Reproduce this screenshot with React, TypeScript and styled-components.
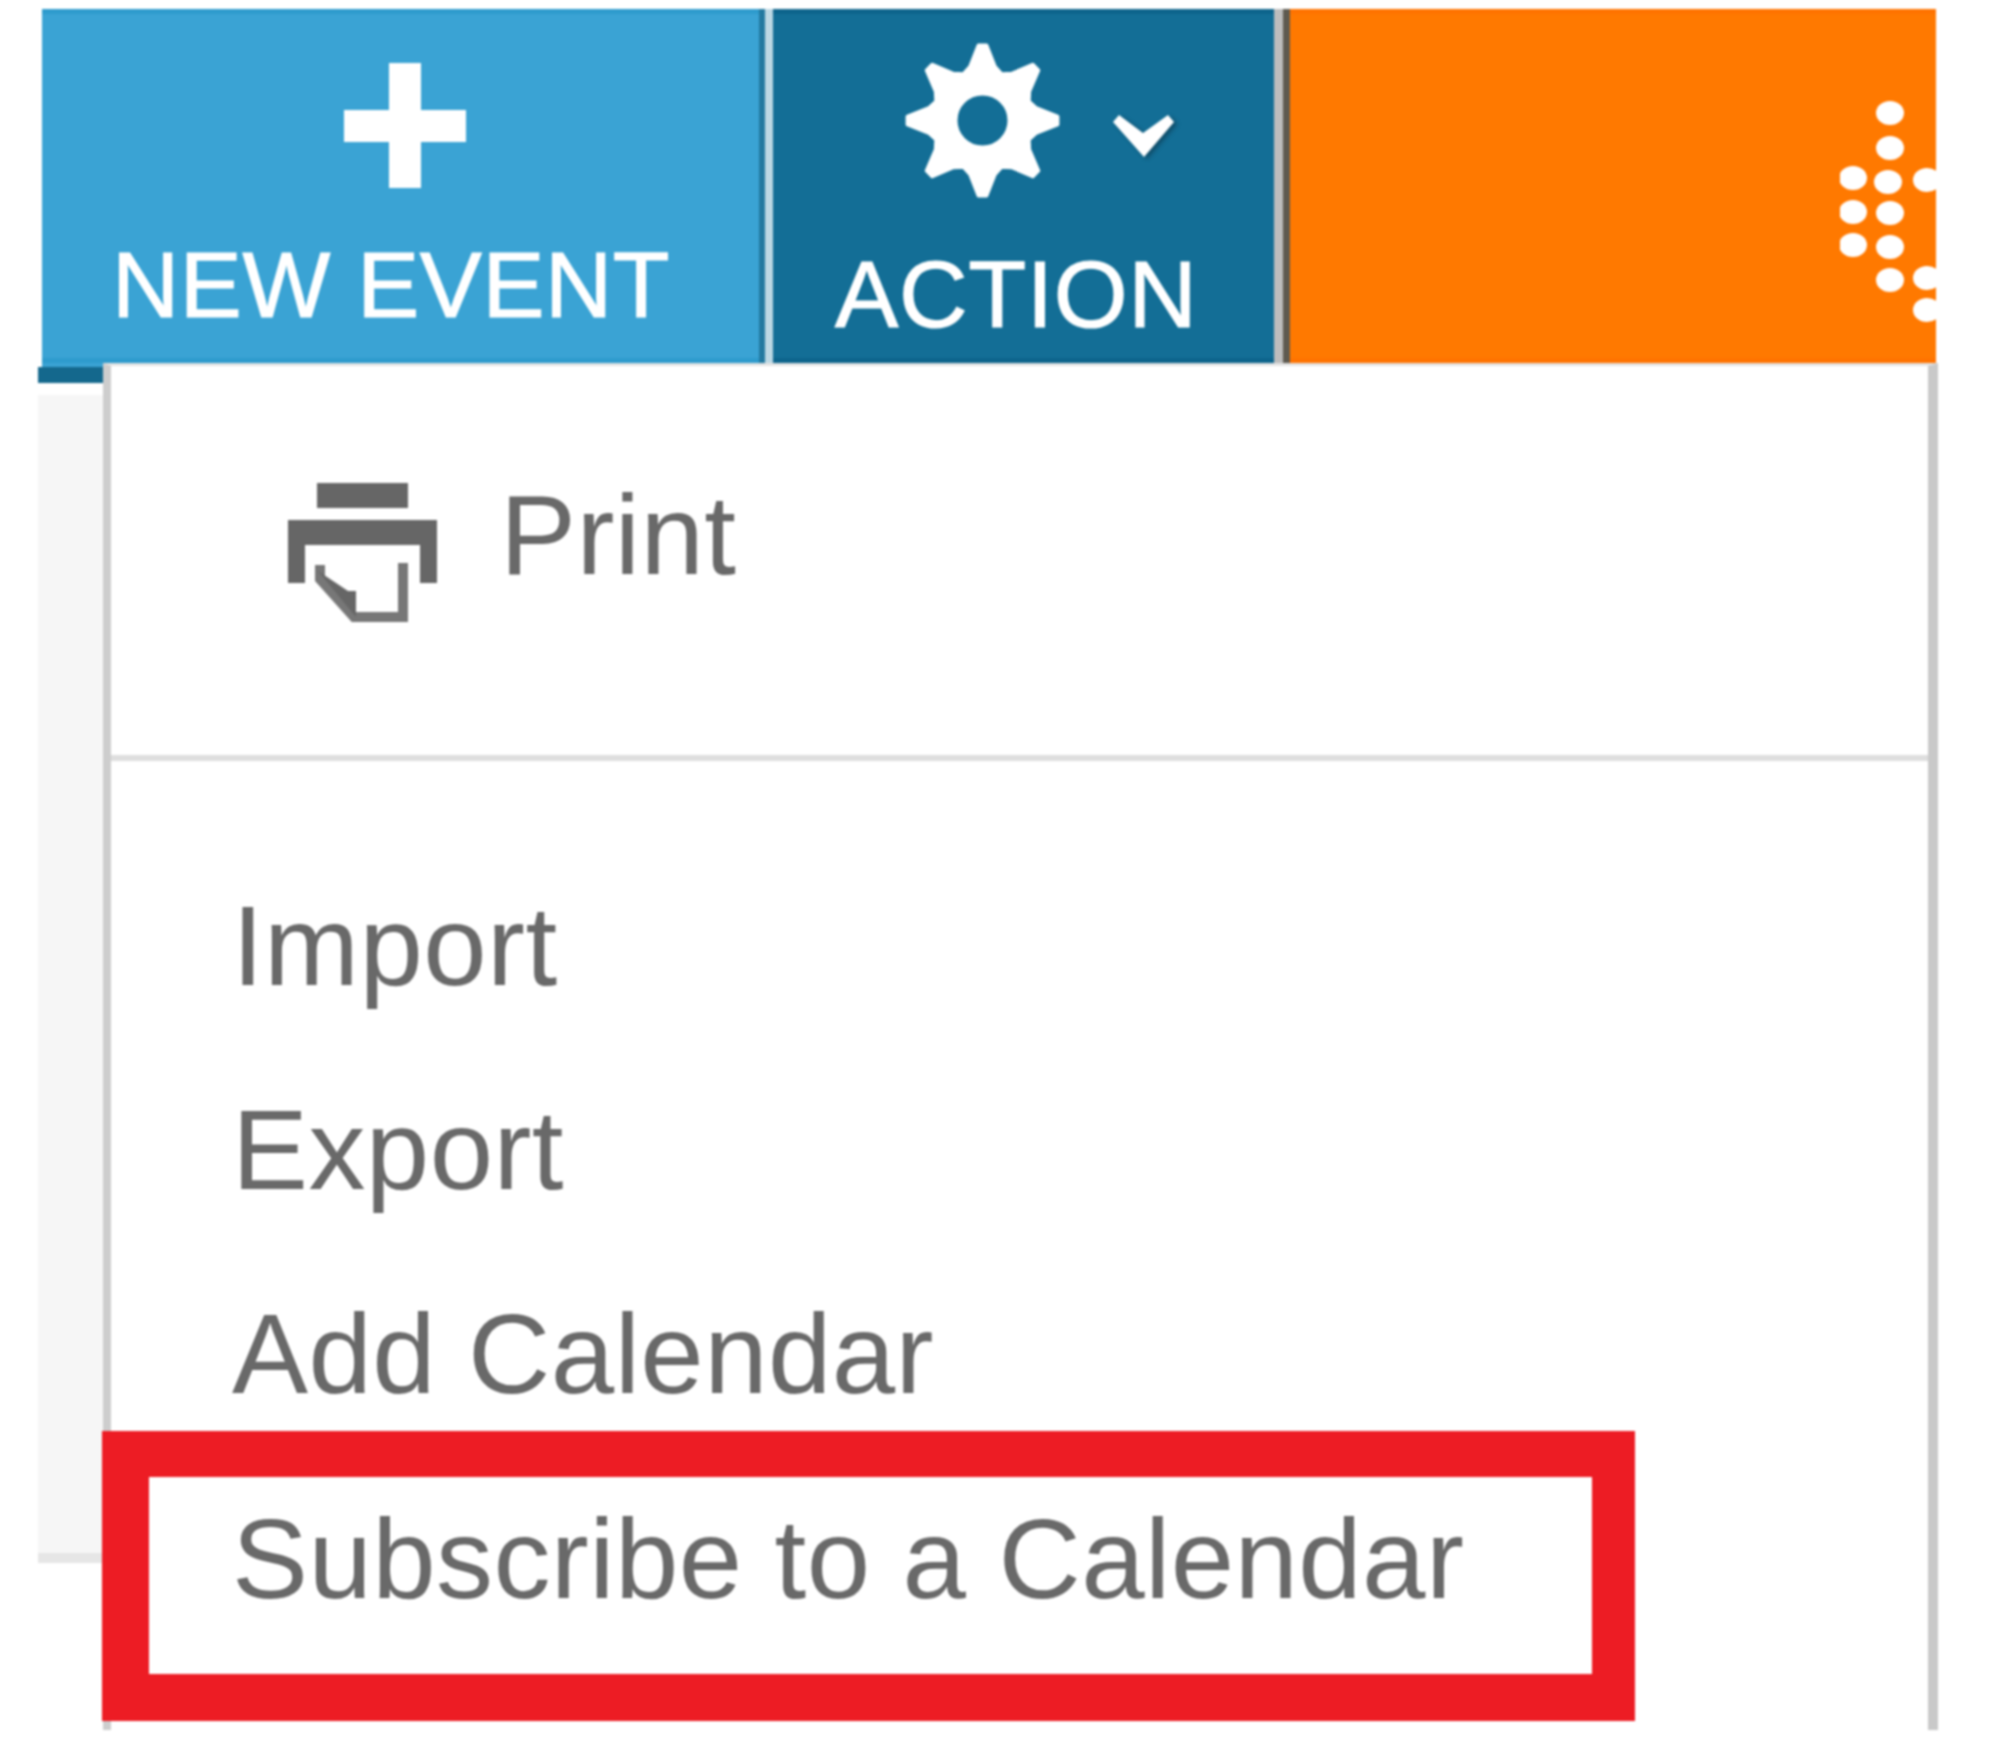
import React from "react";
import styled, { createGlobalStyle } from "styled-components";

const GlobalStyle = createGlobalStyle`
  html, body {
    margin: 0;
    background: #fff;
  }
  body {
    font-family: "Liberation Sans", Arial, sans-serif;
  }
`;

const Page = styled.div`
  width: 2000px;
  height: 1740px;
  box-sizing: border-box;
  padding: 9px 0 0 42px;
  overflow: hidden;
  background: #fff;
  filter: blur(0.8px);
`;

const Toolbar = styled.div`
  display: flex;
  width: 1894px;
  height: 354px;
  color: #fff;
`;

const NewEventButton = styled.div`
  display: flex;
  flex-direction: column;
  align-items: flex-start;
  box-sizing: border-box;
  width: 723px;
  padding: 54px 0 0 70px;
  background: #3aa3d4;
  border-right: 6px solid #2279a0;
  box-shadow: inset 0 5px 0 #2e9bcd, inset 0 -5px 0 #2e9bcd;
`;

const ActionButton = styled.div`
  display: flex;
  flex-direction: column;
  align-items: flex-start;
  box-sizing: border-box;
  width: 501px;
  padding: 34px 0 0 62px;
  background: #136e96;
  box-shadow: inset 0 5px 0 #0d648c, inset 0 -5px 0 #0d648c;
`;

const Divider = styled.div<{ $color: string }>`
  flex: none;
  width: ${(p) => (p.$color === "#bdbdbd" ? 9 : 8)}px;
  background: ${(p) => p.$color};
`;

const BrandPanel = styled.div`
  flex: 1;
  display: flex;
  justify-content: flex-end;
  align-items: flex-start;
  padding-top: 91px;
  background: #ff7900;
  border-left: 7px solid #5e5a50;
  box-shadow: inset 0 5px 0 #ff7300, inset 0 -5px 0 #ff7300;
`;

const Label = styled.span<{ $size: number; $spacing: number }>`
  display: block;
  font-size: ${(p) => p.$size}px;
  letter-spacing: ${(p) => p.$spacing}px;
  line-height: 100px;
  white-space: nowrap;
  -webkit-text-stroke: 1.2px #fff;
`;

const PlusIcon = styled.svg`
  display: block;
  width: 122px;
  height: 125px;
  margin: 0 0 47px 232px;
`;

const GearRow = styled.div`
  display: flex;
  align-items: flex-start;
  gap: 52px;
  margin: 0 0 46px 70px;
`;

const GearIcon = styled.svg`
  display: block;
  width: 155px;
  height: 155px;
`;

const Chevron = styled.svg`
  display: block;
  width: 63px;
  height: 44px;
  margin-top: 70px;
  overflow: visible;
  filter: drop-shadow(3px 2px 2px #0e4a66);
`;

const Body = styled.div`
  display: flex;
  align-items: flex-start;
  margin-left: -4px;
`;

const Side = styled.div`
  width: 65px;
  flex: none;
`;

const SideTail = styled.div`
  height: 4px;
  margin-left: 4px;
  background: #3aa3d4;
`;

const SideStrip = styled.div`
  height: 16px;
  background: #14688d;
`;

const SidePanel = styled.div`
  height: 1158px;
  margin-top: 12px;
  background: #f6f6f6;
  border-bottom: 10px solid #e6e6e6;
`;

const Menu = styled.div`
  box-sizing: border-box;
  width: 1835px;
  height: 1367px;
  background: #fff;
  border-left: 8px solid #cdcdcd;
  border-right: 10px solid #c9c9c9;
  border-top: 3px solid #e4e4e4;
  color: #696969;
  font-size: 114px;
  letter-spacing: 0.4px;
`;

const PrintRow = styled.div`
  display: flex;
  align-items: flex-start;
  gap: 62px;
  height: 204px;
  padding: 67px 0 118px 177px;
  line-height: 204px;
`;

const PrinterIcon = styled.svg`
  display: block;
  flex: none;
  width: 150px;
  height: 142px;
  margin-top: 50px;
`;

const Separator = styled.hr`
  height: 6px;
  margin: 0;
  border: 0;
  background: #dedede;
`;

const ItemList = styled.div`
  padding-top: 83px;
`;

const Item = styled.div`
  padding-left: 121px;
  line-height: 204px;
`;

const Highlight = styled.div`
  box-sizing: border-box;
  width: 1533px;
  height: 290px;
  margin: -25px 0 0 -9px;
  padding-left: 83px;
  border: solid #ed1c24;
  border-width: 46px 43px 47px 47px;
  line-height: 163px;
`;

const dots: [number, number][] = [
  [50, 13],
  [50, 48],
  [13, 78],
  [48, 82],
  [87, 80],
  [13, 112],
  [50, 113],
  [13, 145],
  [50, 147],
  [50, 180],
  [87, 178],
  [87, 210],
];

const gearPath = (() => {
  const c = 77.5;
  const point = (deg: number, r: number) => {
    const a = ((deg - 90) * Math.PI) / 180;
    return `${(c + r * Math.cos(a)).toFixed(2)} ${(c + r * Math.sin(a)).toFixed(2)}`;
  };
  const pts: string[] = [];
  for (let i = 0; i < 8; i++) {
    const t = i * 45;
    pts.push(point(t - 3, 75), point(t + 3, 75), point(t + 13, 55), point(t + 22.5, 50), point(t + 32, 55));
  }
  const hole = `M${c - 27} ${c}a27 27 0 1 0 54 0a27 27 0 1 0 -54 0Z`;
  return `M${pts.join("L")}Z${hole}`;
})();

export default function App() {
  return (
    <Page>
      <GlobalStyle />
      <Toolbar>
        <NewEventButton>
          <PlusIcon viewBox="0 0 122 125" fill="#fff">
            <rect x="45" y="0" width="32" height="125" />
            <rect x="0" y="47" width="122" height="32" />
          </PlusIcon>
          <Label $size={93} $spacing={0.6}>
            NEW EVENT
          </Label>
        </NewEventButton>
        <Divider $color="#bcd8e4" />
        <ActionButton>
          <GearRow>
            <GearIcon viewBox="0 0 155 155">
              <path
                d={gearPath}
                fill="#fff"
                fillRule="evenodd"
                stroke="#fff"
                strokeWidth="4"
                strokeLinejoin="round"
              />
            </GearIcon>
            <Chevron viewBox="0 0 63 44">
              <path d="M1 9 L7 2 L31 20 L56 2 L62 9 L32 44 Z" fill="#fff" />
            </Chevron>
          </GearRow>
          <Label $size={95} $spacing={0.6}>
            ACTION
          </Label>
        </ActionButton>
        <Divider $color="#bdbdbd" />
        <BrandPanel>
          <svg width="96" height="225" viewBox="0 0 96 225">
            {dots.map(([x, y]) => (
              <ellipse key={`${x}-${y}`} cx={x} cy={y} rx="14" ry="12" fill="#fff" />
            ))}
          </svg>
        </BrandPanel>
      </Toolbar>
      <Body>
        <Side>
          <SideTail />
          <SideStrip />
          <SidePanel />
        </Side>
        <Menu>
          <PrintRow>
            <PrinterIcon viewBox="0 0 150 142">
              <rect x="29" y="0" width="91" height="25" fill="#666" />
              <path d="M0 37 H149 V100 H132 V62 H17 V100 H0 Z" fill="#666" />
              <path d="M115 80 V134 H66 L32 96 V82" fill="none" stroke="#777" strokeWidth="10" />
              <path d="M30 88 L60 108 H68 V134 Z" fill="#666" />
            </PrinterIcon>
            <span>Print</span>
          </PrintRow>
          <Separator />
          <ItemList>
            <Item>Import</Item>
            <Item>Export</Item>
            <Item>Add Calendar</Item>
            <Highlight>Subscribe to a Calendar</Highlight>
          </ItemList>
        </Menu>
      </Body>
    </Page>
  );
}
